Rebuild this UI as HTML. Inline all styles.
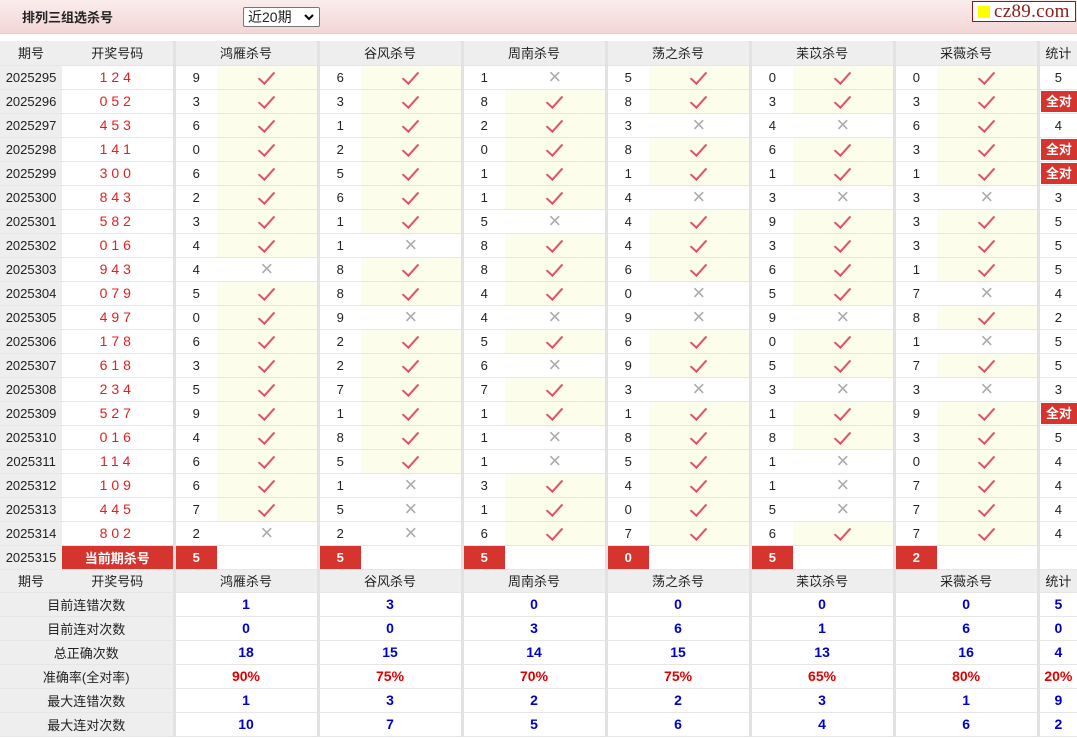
<!DOCTYPE html>
<html><head><meta charset="utf-8">
<style>
*{margin:0;padding:0;box-sizing:border-box}
body{width:1077px;height:738px;background:#fff;font-family:"Liberation Sans","Noto Sans CJK SC",sans-serif;font-size:13px;color:#222;overflow:hidden;position:relative}
.top{position:absolute;left:0;top:0;width:1077px;height:34px;background:linear-gradient(#fbecec,#f3d6d6);border-bottom:1px solid #e7caca}
.title{position:absolute;left:22px;top:7px;font-weight:bold;font-size:13px}
.sel{position:absolute;left:243px;top:7px;width:77px;height:20px;border:1px solid #767676;background:#fff;border-radius:2px;font-size:14px;padding-left:4px;line-height:18px}
.sel svg{position:absolute;right:5px;top:6px}
.logo{position:absolute;left:972px;top:1px;width:104px;height:21px;border:1px solid #8b1a1a;background:#fff;font-family:"Liberation Serif",serif;font-size:19px;color:#8b1a1a;line-height:19px;padding-left:21px;letter-spacing:.3px;overflow:hidden;white-space:nowrap}
.logo i{position:absolute;left:5px;top:4px;width:12px;height:12px;background:#ff0}
table{position:absolute;left:0;top:41px;border-collapse:collapse;table-layout:fixed;width:1077px}
td{height:24px;border-bottom:1px solid #e6e6e6;text-align:center;padding:0;font-size:13px;white-space:nowrap;overflow:hidden}
td.h{background:#eee}
td.k{color:#e02020;letter-spacing:4px;font-size:14px}
td.n{border-left:3px solid #e2e2e2}
td.y{background:#fdfdeb}
td.y:after{content:"";display:inline-block;width:7px;height:14px;border-right:2px solid #e2506a;border-bottom:2px solid #e2506a;transform:rotate(42deg);margin-top:-4px;vertical-align:middle}
td.x:after{content:"\00d7";color:#aaa;font-size:22px;line-height:20px;font-weight:normal}
td.r{background:#d5342f;color:#fff;font-weight:bold}
td.qd span{display:block;background:#d5342f;color:#fff;font-weight:bold;margin:1px 0 1px 1px;line-height:21px}
td.b{color:#0000cc;font-weight:bold;font-size:14px}
td.p{color:#e00000;font-weight:bold;font-size:14px}
tr.s td{height:23px}
</style></head><body>
<div class="top"><div class="title">排列三组选杀号</div>
<div class="sel">近20期<svg width="10" height="7" viewBox="0 0 10 7"><path d="M1 1L5 5L9 1" stroke="#000" stroke-width="2" fill="none"/></svg></div>
<div class="logo"><i></i>cz89.com</div></div>
<table>
<colgroup><col style="width:62px"><col style="width:112px">
<col style="width:43px"><col style="width:101px"><col style="width:43px"><col style="width:101px"><col style="width:43px"><col style="width:101px"><col style="width:43px"><col style="width:101px"><col style="width:43px"><col style="width:101px"><col style="width:43px"><col style="width:101px"><col style="width:39px"></colgroup>
<tr><td class="h">期号</td><td class="h">开奖号码</td><td class="h n" colspan="2">鸿雁杀号</td><td class="h n" colspan="2">谷风杀号</td><td class="h n" colspan="2">周南杀号</td><td class="h n" colspan="2">荡之杀号</td><td class="h n" colspan="2">苿苡杀号</td><td class="h n" colspan="2">采薇杀号</td><td class="h n">统计</td></tr>
<tr><td class="h">2025295</td><td class="k">124</td><td class="n">9</td><td class="y"></td><td class="n">6</td><td class="y"></td><td class="n">1</td><td class="x"></td><td class="n">5</td><td class="y"></td><td class="n">0</td><td class="y"></td><td class="n">0</td><td class="y"></td><td class="n">5</td></tr>
<tr><td class="h">2025296</td><td class="k">052</td><td class="n">3</td><td class="y"></td><td class="n">3</td><td class="y"></td><td class="n">8</td><td class="y"></td><td class="n">8</td><td class="y"></td><td class="n">3</td><td class="y"></td><td class="n">3</td><td class="y"></td><td class="n qd"><span>全对</span></td></tr>
<tr><td class="h">2025297</td><td class="k">453</td><td class="n">6</td><td class="y"></td><td class="n">1</td><td class="y"></td><td class="n">2</td><td class="y"></td><td class="n">3</td><td class="x"></td><td class="n">4</td><td class="x"></td><td class="n">6</td><td class="y"></td><td class="n">4</td></tr>
<tr><td class="h">2025298</td><td class="k">141</td><td class="n">0</td><td class="y"></td><td class="n">2</td><td class="y"></td><td class="n">0</td><td class="y"></td><td class="n">8</td><td class="y"></td><td class="n">6</td><td class="y"></td><td class="n">3</td><td class="y"></td><td class="n qd"><span>全对</span></td></tr>
<tr><td class="h">2025299</td><td class="k">300</td><td class="n">6</td><td class="y"></td><td class="n">5</td><td class="y"></td><td class="n">1</td><td class="y"></td><td class="n">1</td><td class="y"></td><td class="n">1</td><td class="y"></td><td class="n">1</td><td class="y"></td><td class="n qd"><span>全对</span></td></tr>
<tr><td class="h">2025300</td><td class="k">843</td><td class="n">2</td><td class="y"></td><td class="n">6</td><td class="y"></td><td class="n">1</td><td class="y"></td><td class="n">4</td><td class="x"></td><td class="n">3</td><td class="x"></td><td class="n">3</td><td class="x"></td><td class="n">3</td></tr>
<tr><td class="h">2025301</td><td class="k">582</td><td class="n">3</td><td class="y"></td><td class="n">1</td><td class="y"></td><td class="n">5</td><td class="x"></td><td class="n">4</td><td class="y"></td><td class="n">9</td><td class="y"></td><td class="n">3</td><td class="y"></td><td class="n">5</td></tr>
<tr><td class="h">2025302</td><td class="k">016</td><td class="n">4</td><td class="y"></td><td class="n">1</td><td class="x"></td><td class="n">8</td><td class="y"></td><td class="n">4</td><td class="y"></td><td class="n">3</td><td class="y"></td><td class="n">3</td><td class="y"></td><td class="n">5</td></tr>
<tr><td class="h">2025303</td><td class="k">943</td><td class="n">4</td><td class="x"></td><td class="n">8</td><td class="y"></td><td class="n">8</td><td class="y"></td><td class="n">6</td><td class="y"></td><td class="n">6</td><td class="y"></td><td class="n">1</td><td class="y"></td><td class="n">5</td></tr>
<tr><td class="h">2025304</td><td class="k">079</td><td class="n">5</td><td class="y"></td><td class="n">8</td><td class="y"></td><td class="n">4</td><td class="y"></td><td class="n">0</td><td class="x"></td><td class="n">5</td><td class="y"></td><td class="n">7</td><td class="x"></td><td class="n">4</td></tr>
<tr><td class="h">2025305</td><td class="k">497</td><td class="n">0</td><td class="y"></td><td class="n">9</td><td class="x"></td><td class="n">4</td><td class="x"></td><td class="n">9</td><td class="x"></td><td class="n">9</td><td class="x"></td><td class="n">8</td><td class="y"></td><td class="n">2</td></tr>
<tr><td class="h">2025306</td><td class="k">178</td><td class="n">6</td><td class="y"></td><td class="n">2</td><td class="y"></td><td class="n">5</td><td class="y"></td><td class="n">6</td><td class="y"></td><td class="n">0</td><td class="y"></td><td class="n">1</td><td class="x"></td><td class="n">5</td></tr>
<tr><td class="h">2025307</td><td class="k">618</td><td class="n">3</td><td class="y"></td><td class="n">2</td><td class="y"></td><td class="n">6</td><td class="x"></td><td class="n">9</td><td class="y"></td><td class="n">5</td><td class="y"></td><td class="n">7</td><td class="y"></td><td class="n">5</td></tr>
<tr><td class="h">2025308</td><td class="k">234</td><td class="n">5</td><td class="y"></td><td class="n">7</td><td class="y"></td><td class="n">7</td><td class="y"></td><td class="n">3</td><td class="x"></td><td class="n">3</td><td class="x"></td><td class="n">3</td><td class="x"></td><td class="n">3</td></tr>
<tr><td class="h">2025309</td><td class="k">527</td><td class="n">9</td><td class="y"></td><td class="n">1</td><td class="y"></td><td class="n">1</td><td class="y"></td><td class="n">1</td><td class="y"></td><td class="n">1</td><td class="y"></td><td class="n">9</td><td class="y"></td><td class="n qd"><span>全对</span></td></tr>
<tr><td class="h">2025310</td><td class="k">016</td><td class="n">4</td><td class="y"></td><td class="n">8</td><td class="y"></td><td class="n">1</td><td class="x"></td><td class="n">8</td><td class="y"></td><td class="n">8</td><td class="y"></td><td class="n">3</td><td class="y"></td><td class="n">5</td></tr>
<tr><td class="h">2025311</td><td class="k">114</td><td class="n">6</td><td class="y"></td><td class="n">5</td><td class="y"></td><td class="n">1</td><td class="x"></td><td class="n">5</td><td class="y"></td><td class="n">1</td><td class="x"></td><td class="n">0</td><td class="y"></td><td class="n">4</td></tr>
<tr><td class="h">2025312</td><td class="k">109</td><td class="n">6</td><td class="y"></td><td class="n">1</td><td class="x"></td><td class="n">3</td><td class="y"></td><td class="n">4</td><td class="y"></td><td class="n">1</td><td class="x"></td><td class="n">7</td><td class="y"></td><td class="n">4</td></tr>
<tr><td class="h">2025313</td><td class="k">445</td><td class="n">7</td><td class="y"></td><td class="n">5</td><td class="x"></td><td class="n">1</td><td class="y"></td><td class="n">0</td><td class="y"></td><td class="n">5</td><td class="x"></td><td class="n">7</td><td class="y"></td><td class="n">4</td></tr>
<tr><td class="h">2025314</td><td class="k">802</td><td class="n">2</td><td class="x"></td><td class="n">2</td><td class="x"></td><td class="n">6</td><td class="y"></td><td class="n">7</td><td class="y"></td><td class="n">6</td><td class="y"></td><td class="n">7</td><td class="y"></td><td class="n">4</td></tr>
<tr><td class="h">2025315</td><td class="r">当前期杀号</td><td class="n r">5</td><td></td><td class="n r">5</td><td></td><td class="n r">5</td><td></td><td class="n r">0</td><td></td><td class="n r">5</td><td></td><td class="n r">2</td><td></td><td class="n"></td></tr>
<tr class="s"><td class="h">期号</td><td class="h">开奖号码</td><td class="h n" colspan="2">鸿雁杀号</td><td class="h n" colspan="2">谷风杀号</td><td class="h n" colspan="2">周南杀号</td><td class="h n" colspan="2">荡之杀号</td><td class="h n" colspan="2">苿苡杀号</td><td class="h n" colspan="2">采薇杀号</td><td class="h n">统计</td></tr>
<tr><td class="h" colspan="2">目前连错次数</td><td class="n b" colspan="2">1</td><td class="n b" colspan="2">3</td><td class="n b" colspan="2">0</td><td class="n b" colspan="2">0</td><td class="n b" colspan="2">0</td><td class="n b" colspan="2">0</td><td class="n b">5</td></tr>
<tr><td class="h" colspan="2">目前连对次数</td><td class="n b" colspan="2">0</td><td class="n b" colspan="2">0</td><td class="n b" colspan="2">3</td><td class="n b" colspan="2">6</td><td class="n b" colspan="2">1</td><td class="n b" colspan="2">6</td><td class="n b">0</td></tr>
<tr><td class="h" colspan="2">总正确次数</td><td class="n b" colspan="2">18</td><td class="n b" colspan="2">15</td><td class="n b" colspan="2">14</td><td class="n b" colspan="2">15</td><td class="n b" colspan="2">13</td><td class="n b" colspan="2">16</td><td class="n b">4</td></tr>
<tr><td class="h" colspan="2">准确率(全对率)</td><td class="n p" colspan="2">90%</td><td class="n p" colspan="2">75%</td><td class="n p" colspan="2">70%</td><td class="n p" colspan="2">75%</td><td class="n p" colspan="2">65%</td><td class="n p" colspan="2">80%</td><td class="n p">20%</td></tr>
<tr><td class="h" colspan="2">最大连错次数</td><td class="n b" colspan="2">1</td><td class="n b" colspan="2">3</td><td class="n b" colspan="2">2</td><td class="n b" colspan="2">2</td><td class="n b" colspan="2">3</td><td class="n b" colspan="2">1</td><td class="n b">9</td></tr>
<tr><td class="h" colspan="2">最大连对次数</td><td class="n b" colspan="2">10</td><td class="n b" colspan="2">7</td><td class="n b" colspan="2">5</td><td class="n b" colspan="2">6</td><td class="n b" colspan="2">4</td><td class="n b" colspan="2">6</td><td class="n b">2</td></tr>
</table>
</body></html>
